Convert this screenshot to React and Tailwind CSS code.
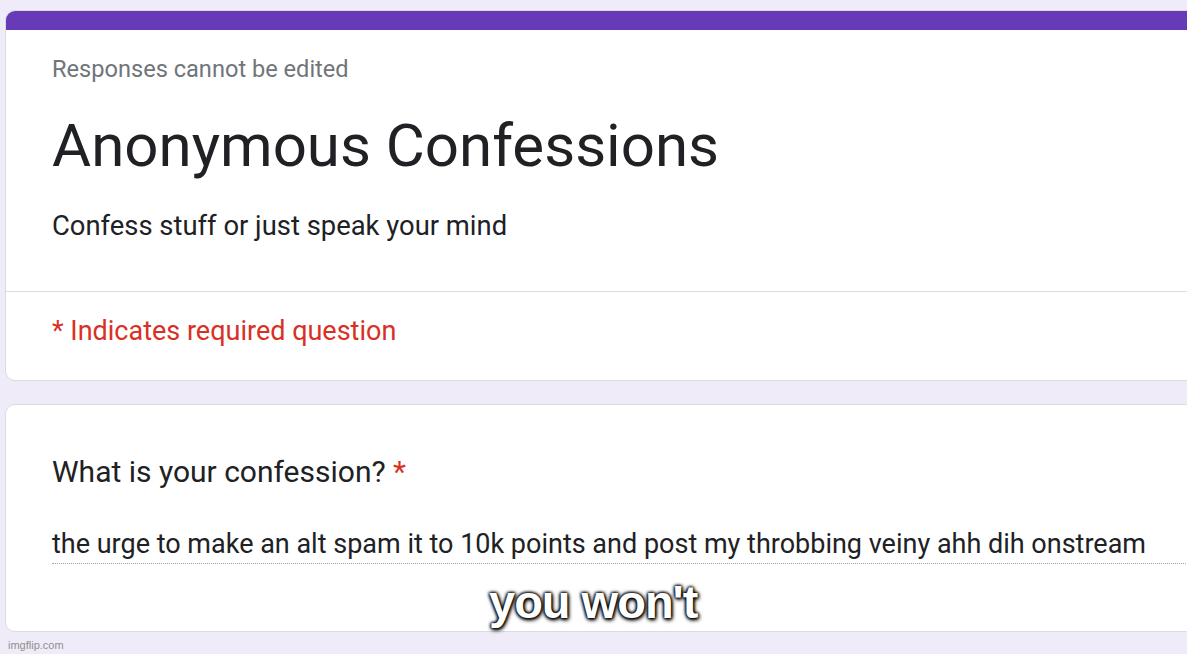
import React from 'react';

const Card = ({ children, className = '' }) => (
  <div className={`w-[1200px] bg-white border border-[#dadce0] overflow-hidden ${className}`}>
    {children}
  </div>
);

const App = () => {
  return (
    <div className="relative h-[654px] w-full overflow-hidden bg-[#f0ebf8] pt-[10px] pl-[5px] font-['Roboto',sans-serif]">
      {/* Header card */}
      <Card className="rounded-l-[10px]">
        <div className="h-[19px] bg-[#673ab7]" />
        <div className="px-[46px] pt-[25px] pb-[49px]">
          <p className="text-[23.6px] leading-[28px] text-[#70757a]">Responses cannot be edited</p>
          <h1 className="mt-[27px] text-[60px] leading-[72px] text-[#202124]">Anonymous Confessions</h1>
          <p className="mt-[28px] text-[27.4px] leading-[32px] text-[#202124]">Confess stuff or just speak your mind</p>
        </div>
        <div className="border-t border-[#dadce0] px-[46px] pt-[23px] pb-[33px]">
          <p className="text-[27px] leading-[32px] text-[#d93025]">* Indicates required question</p>
        </div>
      </Card>

      {/* Question card */}
      <Card className="mt-[23px] rounded-l-[10px] h-[228px]">
        <div className="pl-[46px] pt-[49px]">
          <p className="text-[30px] leading-[36px] text-[#202124]">
            What is your confession? <span className="text-[#d93025]">*</span>
          </p>
          <p className="mt-[38px] border-b border-dotted border-[#9aa0a6] pb-[3px] text-[27px] leading-[32px] text-[#202124]">
            the urge to make an alt spam it to 10k points and post my throbbing veiny ahh dih onstream
          </p>
        </div>
      </Card>

      {/* Meme caption */}
      <div className="absolute left-[489px] top-[574px] font-['Liberation_Sans',Arial,sans-serif] text-[47px] font-bold leading-[56px] tracking-[-1px] text-white [text-shadow:0_0_3px_#000,0_0_3px_#000,0_0_4px_#000,1px_2px_4px_#000]">
        you won't
      </div>

      <div className="absolute left-[8px] top-[638px] font-['Liberation_Sans',Arial,sans-serif] text-[11px] leading-[14px] text-[#8f8f8f]">
        imgflip.com
      </div>
    </div>
  );
};

export default App;
